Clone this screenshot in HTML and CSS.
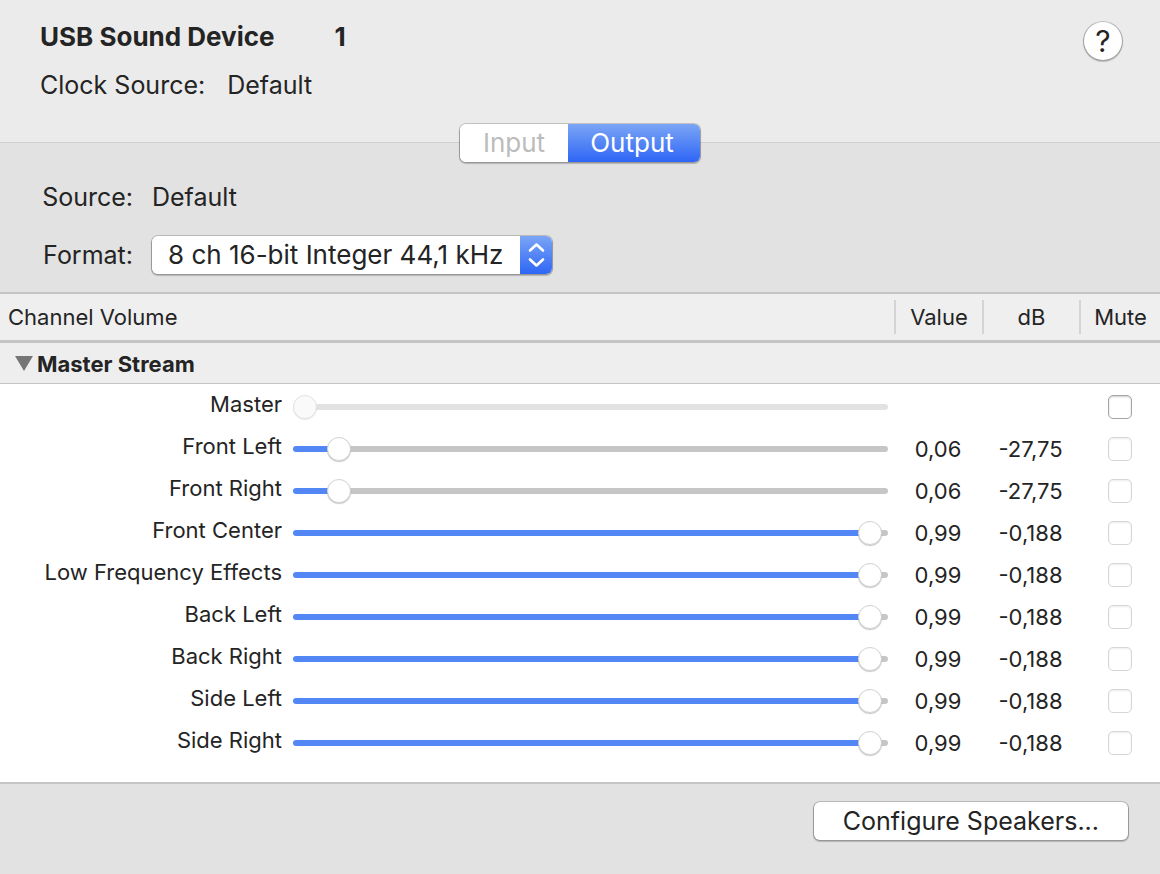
FILE: index.html
```html
<!DOCTYPE html>
<html lang="en">
<head>
  <meta charset="UTF-8">
  <meta name="viewport" content="width=device-width, initial-scale=1.0">
  <title>USB Sound Device</title>
  <link rel="stylesheet" href="styles.css">
</head>
<body>
  <div class="app">
    <header class="device-header">
      <div class="device-info">
        <h1 class="device-name"><span>USB Sound Device</span><span>1</span></h1>
        <p class="clock-source"><span>Clock Source:</span><span>Default</span></p>
      </div>
      <button type="button" class="help-btn" aria-label="Help">?</button>
    </header>

    <section class="stream-settings">
      <div class="tabs">
        <button type="button" class="tab" disabled>Input</button>
        <button type="button" class="tab active">Output</button>
      </div>
      <div class="settings">
        <span class="setting-label">Source:</span>
        <span>Default</span>
        <label class="setting-label" for="format">Format:</label>
        <div class="select">
          <select id="format">
            <option>8 ch 16-bit Integer 44,1 kHz</option>
          </select>
          <span class="select-arrows">
            <svg width="18" height="26" viewBox="0 0 18 26" fill="none" stroke="#fff" stroke-width="2.600" stroke-linecap="round" stroke-linejoin="round">
              <path d="M3 8.500L9.500 2.500L16 8.500"></path>
              <path d="M3 17.500L9.500 23.500L16 17.500"></path>
            </svg>
          </span>
        </div>
      </div>
    </section>

    <main class="channels">
      <table class="channel-table">
        <colgroup>
          <col class="col-name">
          <col>
          <col class="col-value">
          <col class="col-db">
          <col class="col-mute">
        </colgroup>
        <thead>
          <tr>
            <th colspan="2" class="title">Channel Volume</th>
            <th><span>Value</span></th>
            <th><span>dB</span></th>
            <th><span>Mute</span></th>
          </tr>
        </thead>
        <tbody>
          <tr class="group">
            <th colspan="5">
              <button type="button" class="disclosure" aria-expanded="true">
                <svg width="18" height="15" viewBox="0 0 18 15"><path d="M0 0H18L9 15Z" fill="#757575"></path></svg>
                Master Stream
              </button>
            </th>
          </tr>
          <tr>
            <th><label for="vol-master">Master</label></th>
            <td class="volume"><input type="range" id="vol-master" min="0" max="100" value="0" style="--fill: 0%" disabled></td>
            <td></td>
            <td></td>
            <td><input type="checkbox" aria-label="Mute Master"></td>
          </tr>
          <tr>
            <th><label for="vol-fl">Front Left</label></th>
            <td class="volume"><input type="range" id="vol-fl" min="0" max="100" value="6" style="--fill: 6%"></td>
            <td>0,06</td>
            <td>-27,75</td>
            <td><input type="checkbox" aria-label="Mute Front Left" disabled></td>
          </tr>
          <tr>
            <th><label for="vol-fr">Front Right</label></th>
            <td class="volume"><input type="range" id="vol-fr" min="0" max="100" value="6" style="--fill: 6%"></td>
            <td>0,06</td>
            <td>-27,75</td>
            <td><input type="checkbox" aria-label="Mute Front Right" disabled></td>
          </tr>
          <tr>
            <th><label for="vol-fc">Front Center</label></th>
            <td class="volume"><input type="range" id="vol-fc" min="0" max="100" value="99" style="--fill: 98%"></td>
            <td>0,99</td>
            <td>-0,188</td>
            <td><input type="checkbox" aria-label="Mute Front Center" disabled></td>
          </tr>
          <tr>
            <th><label for="vol-lfe">Low Frequency Effects</label></th>
            <td class="volume"><input type="range" id="vol-lfe" min="0" max="100" value="99" style="--fill: 98%"></td>
            <td>0,99</td>
            <td>-0,188</td>
            <td><input type="checkbox" aria-label="Mute Low Frequency Effects" disabled></td>
          </tr>
          <tr>
            <th><label for="vol-bl">Back Left</label></th>
            <td class="volume"><input type="range" id="vol-bl" min="0" max="100" value="99" style="--fill: 98%"></td>
            <td>0,99</td>
            <td>-0,188</td>
            <td><input type="checkbox" aria-label="Mute Back Left" disabled></td>
          </tr>
          <tr>
            <th><label for="vol-br">Back Right</label></th>
            <td class="volume"><input type="range" id="vol-br" min="0" max="100" value="99" style="--fill: 98%"></td>
            <td>0,99</td>
            <td>-0,188</td>
            <td><input type="checkbox" aria-label="Mute Back Right" disabled></td>
          </tr>
          <tr>
            <th><label for="vol-sl">Side Left</label></th>
            <td class="volume"><input type="range" id="vol-sl" min="0" max="100" value="99" style="--fill: 98%"></td>
            <td>0,99</td>
            <td>-0,188</td>
            <td><input type="checkbox" aria-label="Mute Side Left" disabled></td>
          </tr>
          <tr>
            <th><label for="vol-sr">Side Right</label></th>
            <td class="volume"><input type="range" id="vol-sr" min="0" max="100" value="99" style="--fill: 98%"></td>
            <td>0,99</td>
            <td>-0,188</td>
            <td><input type="checkbox" aria-label="Mute Side Right" disabled></td>
          </tr>
        </tbody>
      </table>
    </main>

    <footer class="footer">
      <button type="button" class="btn">Configure Speakers...</button>
    </footer>
  </div>
</body>
</html>
```

FILE: styles.css
```css
:root {
  --bg-header: #ebebeb;
  --bg-panel: #e2e2e2;
  --bg-table-head: #efefef;
  --line: #c4c4c4;
  --text: #242424;
  --blue: #5287f5;
  --blue-gradient: linear-gradient(#7ba5f5, #2e66f6);
  --control-shadow: 0 0 0 1px rgba(0, 0, 0, 0.16), 0 1px 1px 1px rgba(0, 0, 0, 0.2);
}

* {
  margin: 0;
  padding: 0;
  box-sizing: border-box;
}

body {
  font-family: Inter, 'Liberation Sans', sans-serif;
  font-size: 25px;
  line-height: 32px;
  color: var(--text);
  background-color: var(--bg-panel);
}

button,
select {
  font: inherit;
  color: inherit;
  border: none;
}

.app {
  min-height: 100vh;
  display: flex;
  flex-direction: column;
}

/* Device header */
.device-header {
  display: flex;
  justify-content: space-between;
  align-items: flex-start;
  padding: 21px 38px 41px 40px;
  background-color: var(--bg-header);
  border-bottom: 1px solid #d0d0d0;
}

.device-info {
  display: grid;
  gap: 16px;
}

.device-name {
  display: flex;
  gap: 60px;
  font-size: 26px;
  font-weight: 700;
}

.clock-source {
  display: flex;
  gap: 22px;
}

.help-btn {
  width: 38px;
  height: 38px;
  margin-top: 1px;
  border-radius: 50%;
  background-color: #fff;
  box-shadow: var(--control-shadow);
  font-size: 30px;
}

/* Input / Output tabs */
.stream-settings {
  padding-bottom: 18px;
}

.tabs {
  display: flex;
  width: 240px;
  height: 38px;
  margin: -19px auto 0;
  border-radius: 6px;
  overflow: hidden;
  background-color: #fff;
  box-shadow: var(--control-shadow);
}

.tab {
  flex: 0 0 108px;
  background-color: #fff;
  font-size: 26px;
}

.tab:disabled {
  color: #bcbcbc;
}

.tab.active {
  flex: 1;
  padding-right: 4px;
  color: #fff;
  background: var(--blue-gradient);
}

.settings {
  display: grid;
  grid-template-columns: 93px auto;
  justify-content: start;
  align-items: center;
  gap: 23px 19px;
  padding: 19px 40px 0;
}

.setting-label {
  text-align: right;
}

.select {
  position: relative;
  height: 38px;
  border-radius: 6px;
  box-shadow: var(--control-shadow);
}

.select select {
  appearance: none;
  width: 400px;
  height: 100%;
  padding: 0 32px 0 16px;
  border-radius: 6px;
  background-color: #fff;
  font-size: 26px;
}

.select-arrows {
  position: absolute;
  top: 0;
  right: 0;
  bottom: 0;
  width: 32px;
  display: flex;
  align-items: center;
  justify-content: center;
  border-radius: 0 6px 6px 0;
  background: var(--blue-gradient);
  pointer-events: none;
}

/* Channel table */
.channels {
  flex: 1;
  padding-bottom: 17px;
  background-color: #fff;
  border-top: 2px solid var(--line);
  border-bottom: 2px solid var(--line);
}

.channel-table {
  width: 100%;
  table-layout: fixed;
  border-spacing: 0;
  font-size: 22px;
  line-height: 34px;
}

.col-name {
  width: 283px;
}

.col-value {
  width: 88px;
}

.col-db {
  width: 97px;
}

.col-mute {
  width: 81px;
}

.channel-table th {
  font-weight: 400;
}

.channel-table thead th {
  padding: 6px 0;
  background-color: var(--bg-table-head);
  border-bottom: 3px solid var(--line);
}

.channel-table thead span {
  display: block;
  border-left: 2px solid #d4d4d4;
}

.channel-table thead .title {
  padding-left: 8px;
  text-align: left;
}

.channel-table .group th {
  height: 41px;
  padding: 2px 15px 0;
  text-align: left;
  background-color: #eee;
  border-bottom: 1px solid var(--line);
}

.disclosure {
  display: flex;
  align-items: center;
  gap: 4px;
  background: none;
  font-weight: 700;
}

.disclosure svg {
  margin-bottom: 2px;
}

.channel-table tbody th {
  padding: 0 1px 2px 0;
  text-align: right;
}

.channel-table td {
  height: 42px;
  padding-top: 3px;
  text-align: center;
}

.channel-table .volume {
  padding: 4px 6px 0 10px;
}

input[type="range"] {
  appearance: none;
  display: block;
  width: 100%;
  height: 24px;
  background: none;
}

input[type="range"]::-webkit-slider-runnable-track {
  height: 6px;
  border-radius: 3px;
  background: linear-gradient(to right, var(--blue) var(--fill), #c6c6c6 var(--fill));
}

input[type="range"]::-webkit-slider-thumb {
  appearance: none;
  width: 24px;
  height: 24px;
  margin-top: -9px;
  border: 1px solid #d2d2d2;
  border-radius: 50%;
  background-color: #fff;
  box-shadow: 0 1px 1px rgba(0, 0, 0, 0.22);
}

input[type="range"]:disabled::-webkit-slider-runnable-track {
  background: #e2e2e2;
}

input[type="range"]:disabled::-webkit-slider-thumb {
  border-color: #e2e2e2;
  background-color: #fafafa;
  box-shadow: 0 1px 1px rgba(0, 0, 0, 0.08);
}

input[type="checkbox"] {
  appearance: none;
  display: block;
  width: 24px;
  height: 24px;
  margin: 0 auto;
  border: 1px solid #a6a6a6;
  border-radius: 5px;
  background-color: #fff;
  box-shadow: inset 0 1px 2px rgba(0, 0, 0, 0.2);
}

input[type="checkbox"]:disabled {
  border-color: #d6d6d6;
  box-shadow: inset 0 1px 2px rgba(0, 0, 0, 0.08);
}

/* Footer */
.footer {
  display: flex;
  justify-content: flex-end;
  padding: 18px 32px 34px;
}

.btn {
  height: 38px;
  padding: 0 29px;
  border-radius: 6px;
  background-color: #fff;
  box-shadow: var(--control-shadow);
}
```
